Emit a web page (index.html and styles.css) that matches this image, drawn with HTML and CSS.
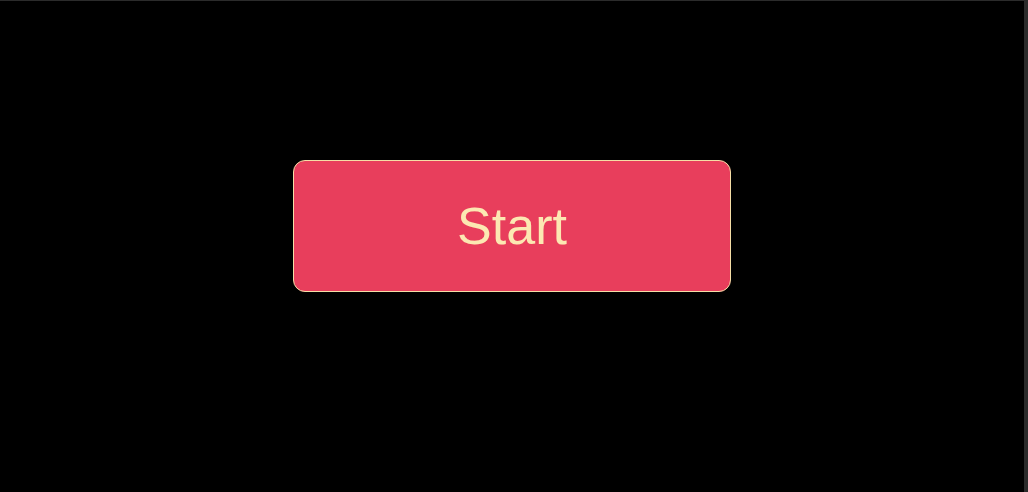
FILE: index.html
```html
<!DOCTYPE html>
<html>
<head>
<meta charset="utf-8">
<link rel="stylesheet" href="styles.css">
</head>
<body>
<div class="frame">
  <main class="stage">
    <button class="start-btn">Start</button>
  </main>
  <div class="edge"></div>
</div>
</body>
</html>
```
FILE: styles.css
```css
html, body {
  margin: 0;
  padding: 0;
  height: 100%;
  background: #000;
}
.frame {
  display: flex;
  height: 100%;
  box-sizing: border-box;
  border-top: 1px solid #2b2b2b;
}
.stage {
  flex: 1;
  display: flex;
  justify-content: center;
  align-items: flex-start;
  padding-top: 159px;
}
.edge {
  width: 4px;
  background: #2b2b2b;
}
.start-btn {
  width: 438px;
  height: 132px;
  box-sizing: border-box;
  background: #e83e5c;
  border: 1.5px solid #f5dea6;
  border-radius: 12px;
  color: #fce8b2;
  font-family: "Liberation Sans", Arial, sans-serif;
  font-size: 52px;
  padding: 0;
  cursor: pointer;
}
```
